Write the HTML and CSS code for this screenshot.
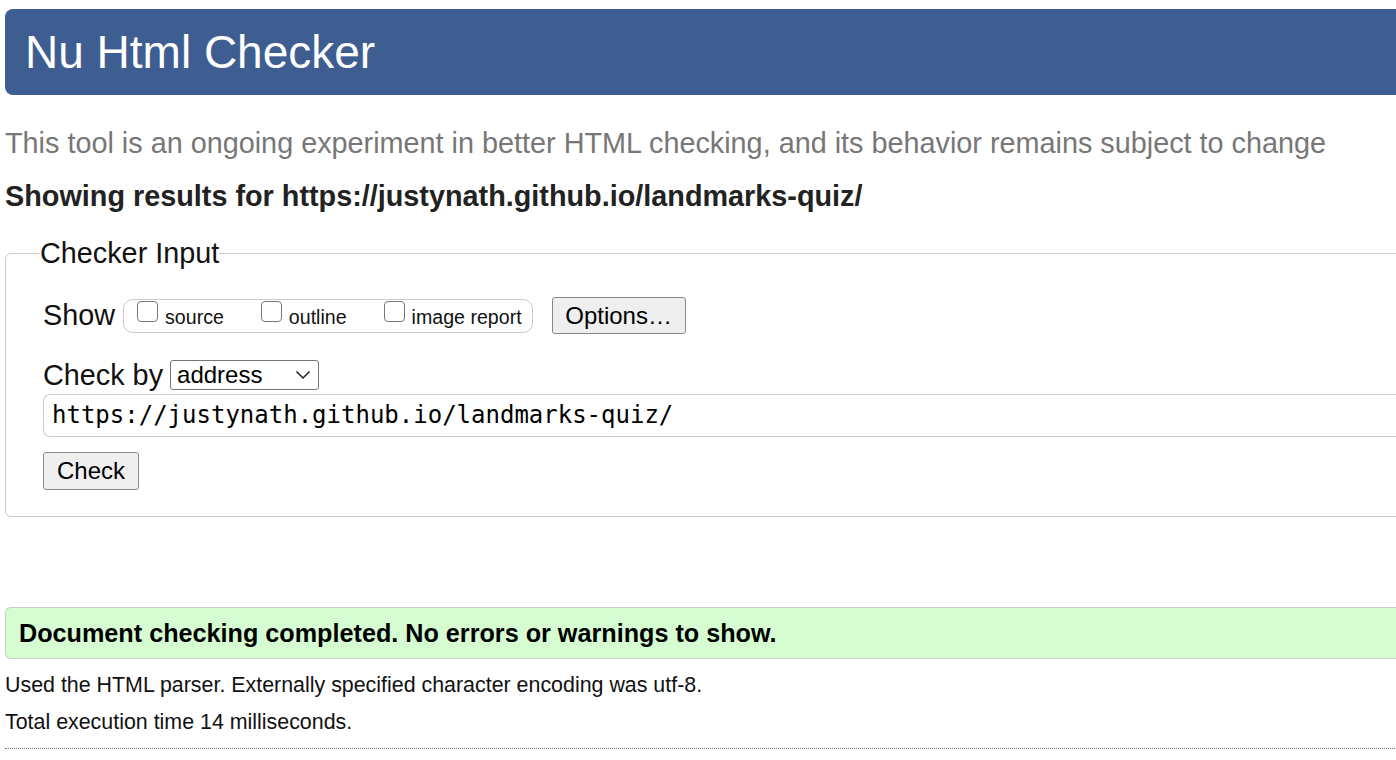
FILE: index.html
```html
<!DOCTYPE html>
<html>
<head>
<meta charset="utf-8">
<link rel="stylesheet" href="styles.css">
</head>
<body>
<div class="page">
  <h1 class="banner">Nu Html Checker</h1>
  <p class="tagline">This tool is an ongoing experiment in better HTML checking, and its behavior remains subject to change</p>
  <p class="showing">Showing results for https://justynath.github.io/landmarks-quiz/</p>
  <fieldset class="input-set">
    <legend class="legend">Checker Input</legend>
    <div class="row show-row">
      <span class="label">Show</span>
      <span class="opts">
        <label class="opt"><span class="cb"></span>source</label>
        <label class="opt"><span class="cb"></span>outline</label>
        <label class="opt"><span class="cb"></span>image report</label>
      </span>
      <span class="btn options">Options…</span>
    </div>
    <div class="row by-row">
      <span class="label">Check by</span>
      <span class="select">address<svg class="chev" width="16" height="10" viewBox="0 0 16 10"><path d="M1.5 1.5 L8 8 L14.5 1.5" fill="none" stroke="#222" stroke-width="1.5"/></svg></span>
    </div>
    <div class="url">https://justynath.github.io/landmarks-quiz/</div>
    <span class="btn check">Check</span>
  </fieldset>
  <div class="success">Document checking completed. No errors or warnings to show.</div>
  <p class="details first">Used the HTML parser. Externally specified character encoding was utf-8.</p>
  <p class="details">Total execution time 14 milliseconds.</p>
  <hr class="rule">
</div>
</body>
</html>
```
FILE: styles.css
```css
html, body {
  margin: 0;
  padding: 0;
  background: #fff;
  overflow: hidden;
}
body {
  font-family: "Liberation Sans", Arial, sans-serif;
  color: #111;
}
.page {
  width: 1500px;
  padding: 9px 0 0 5px;
}
.banner {
  margin: 0;
  height: 86px;
  line-height: 86px;
  background: #3e5e92;
  color: #fff;
  font-weight: normal;
  font-size: 46px;
  padding-left: 20px;
  border-radius: 8px 0 0 8px;
}
.tagline {
  margin: 31px 0 0 0;
  font-size: 28.8px;
  line-height: 34px;
  color: #777;
}
.showing {
  margin: 19px 0 0 0;
  font-size: 28.8px;
  line-height: 34px;
  font-weight: bold;
  color: #222;
}
.input-set {
  margin: 23px 0 0 0;
  border: 1px solid #ccc;
  border-radius: 6px;
  padding: 27px 0 26px 37px;
  min-width: 0;
}
.legend {
  font-size: 28.8px;
  line-height: 34px;
  padding: 0;
  margin-left: -3px;
  color: #111;
}
.row {
  display: flex;
  align-items: center;
}
.label {
  font-size: 28.8px;
  color: #111;
}
.show-row {
  height: 37px;
}
.opts {
  display: inline-flex;
  align-items: center;
  margin-left: 8px;
  height: 34px;
  border: 1px solid #ccc;
  border-radius: 10px;
  padding: 0 10px 0 13px;
  box-sizing: border-box;
}
.opt {
  display: inline-flex;
  align-items: center;
  font-size: 19.6px;
  margin-right: 37px;
  padding-top: 4px;
}
.opt:last-child {
  margin-right: 0;
}
.cb {
  width: 21px;
  height: 21px;
  border: 1.5px solid #777;
  border-radius: 4px;
  box-sizing: border-box;
  margin-right: 7px;
  position: relative;
  top: -6px;
}
.btn {
  display: inline-flex;
  align-items: center;
  justify-content: center;
  box-sizing: border-box;
  background: #efefef;
  border: 1px solid #888;
  border-radius: 3px;
  font-size: 24px;
  color: #000;
}
.options {
  margin-left: 19px;
  width: 134px;
  height: 37px;
}
.by-row {
  margin-top: 26px;
  height: 30px;
}
.select {
  margin-left: 7px;
  display: inline-flex;
  align-items: center;
  justify-content: space-between;
  width: 149px;
  height: 30px;
  box-sizing: border-box;
  border: 1px solid #777;
  border-radius: 3px;
  padding: 0 7px 0 6px;
  font-size: 24px;
  color: #000;
}
.url {
  margin-top: 4px;
  height: 43px;
  box-sizing: border-box;
  border: 1px solid #ccc;
  border-right: none;
  border-radius: 7px 0 0 7px;
  padding-left: 8px;
  font-family: "DejaVu Sans Mono", monospace;
  font-size: 24px;
  line-height: 41px;
  color: #000;
}
.check {
  margin-top: 15px;
  width: 96px;
  height: 38px;
}
.success {
  margin-top: 90px;
  height: 52px;
  box-sizing: border-box;
  border: 1px solid #ccc;
  border-right: none;
  border-radius: 6px 0 0 6px;
  background: #d5fdd1;
  padding-left: 13px;
  font-size: 25.2px;
  font-weight: bold;
  line-height: 50px;
  color: #000;
}
.details {
  margin: 11px 0 0 0;
  font-size: 21.4px;
  line-height: 26px;
  color: #111;
}
.details.first {
  margin-top: 13px;
}
.rule {
  margin: 13px 0 0 0;
  border: none;
  border-top: 1px dotted #777;
  height: 0;
}
```
